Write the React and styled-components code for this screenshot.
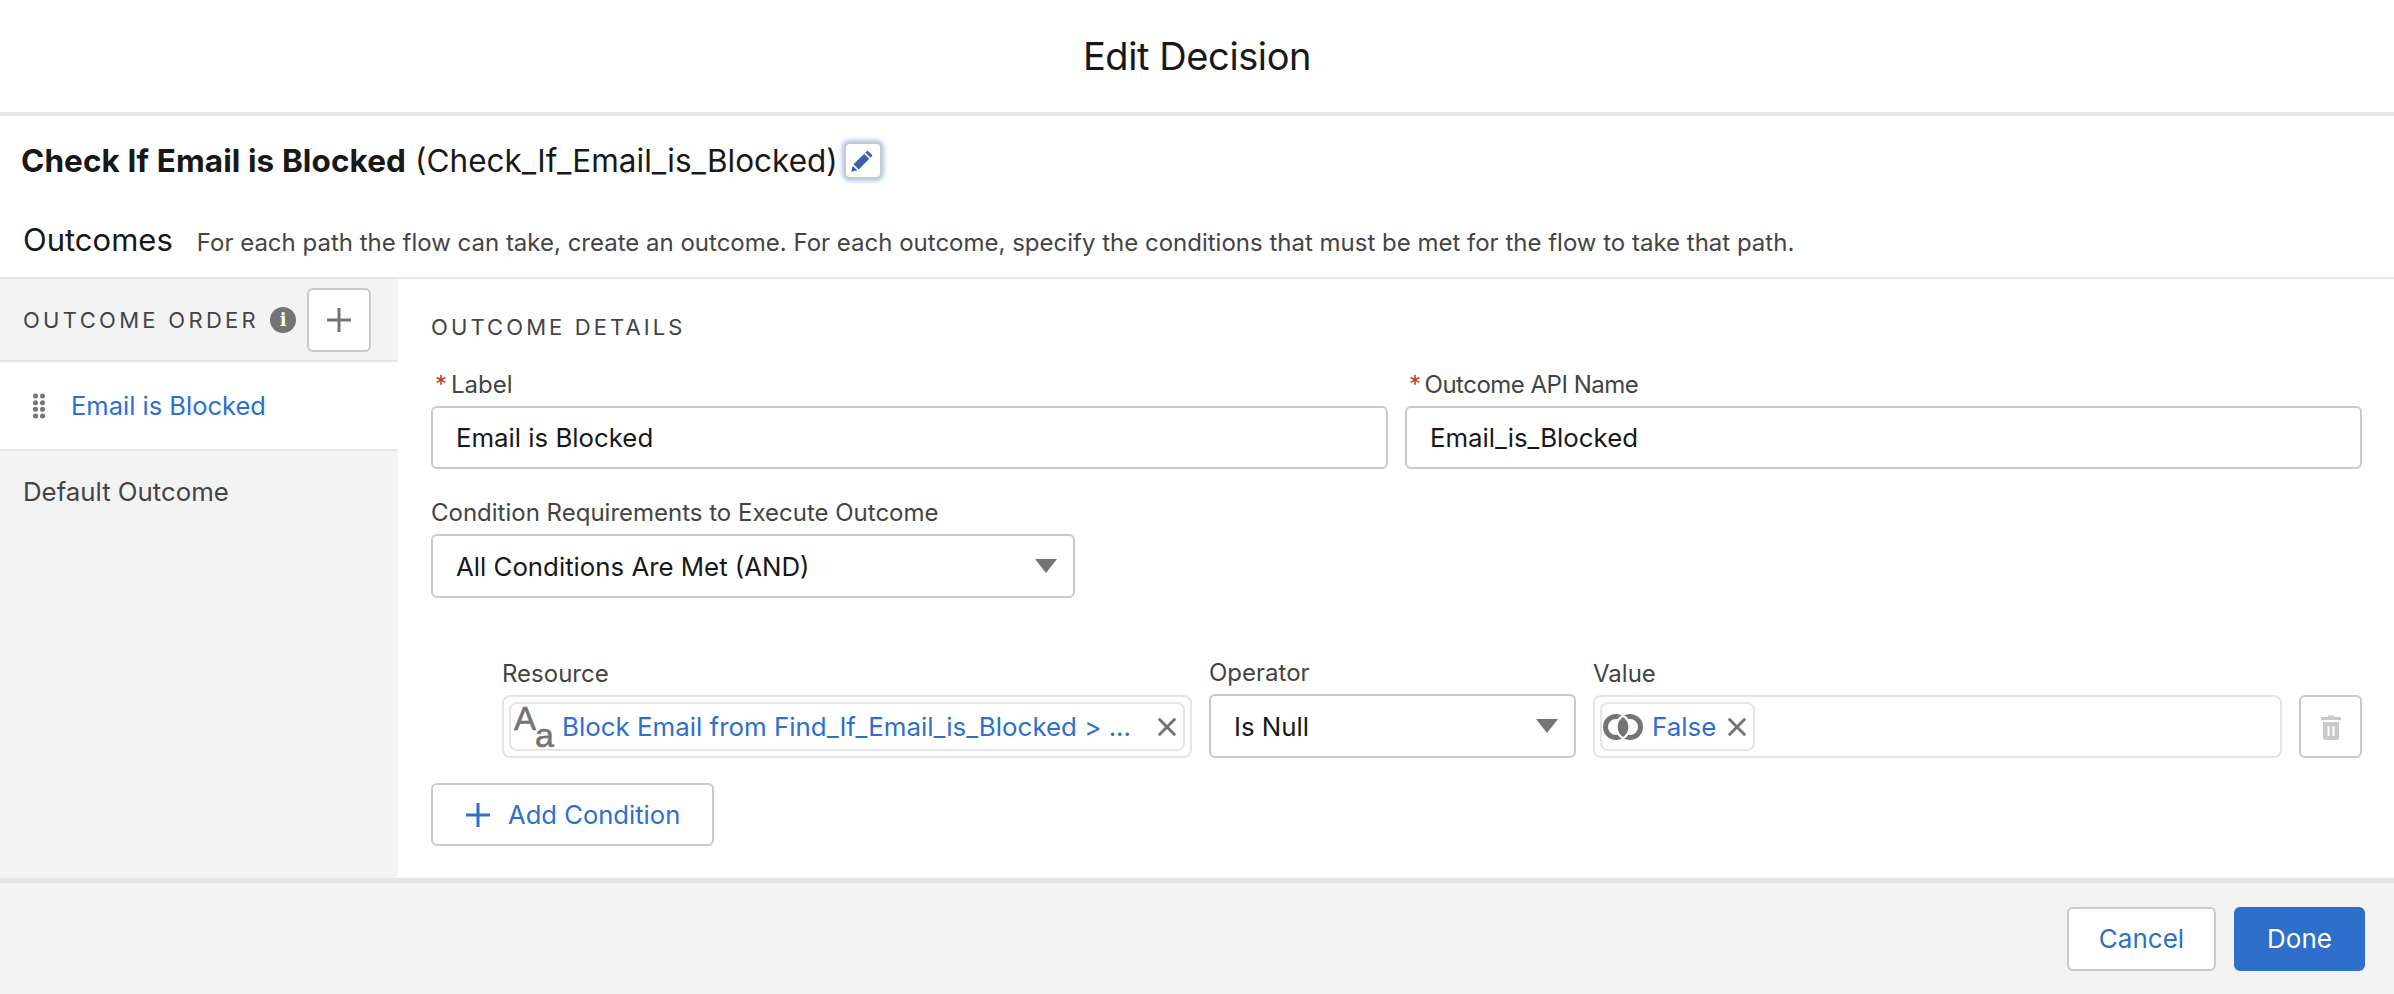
import React from "react";
import styled, { createGlobalStyle } from "styled-components";

const GlobalStyle = createGlobalStyle`
  html, body { margin: 0; padding: 0; background: #fff; }
  body { font-family: Inter, "Liberation Sans", sans-serif; color: #181818; }
  * { box-sizing: border-box; }
`;

const blue = "#2e6fcb";

const Modal = styled.div`
  width: 2394px;
  height: 994px;
  display: flex;
  flex-direction: column;
  overflow: hidden;
`;

const Header = styled.header`
  height: 116px;
  flex: none;
  display: flex;
  align-items: center;
  justify-content: center;
  border-bottom: 4px solid #e5e5e5;
`;

const Title = styled.h1`
  margin: 0;
  font-size: 38px;
  letter-spacing: -0.4px;
  font-weight: 400;
  color: #181818;
`;

const NameRow = styled.div`
  height: 84px;
  flex: none;
  display: flex;
  align-items: center;
  padding: 4px 0 0 21px;
  font-size: 31.5px;
  color: #181818;
  strong { font-weight: 700; margin-right: 9px; letter-spacing: 0.1px; }
`;

const EditButton = styled.button`
  width: 38px;
  height: 37px;
  margin-left: 6px;
  padding: 0;
  display: flex;
  align-items: center;
  justify-content: center;
  background: #fff;
  border: 2px solid #c9c9c9;
  border-radius: 6px;
  box-shadow: 0 0 4px 2px #a9c8f0;
`;

const OutcomesRow = styled.div`
  height: 79px;
  flex: none;
  display: flex;
  align-items: center;
  padding: 2px 0 0 23px;
  border-bottom: 2px solid #e5e5e5;
`;

const OutcomesTitle = styled.span`
  font-size: 31px;
  color: #181818;
  margin-right: 24px;
`;

const OutcomesHint = styled.span`
  font-size: 24px;
  color: #444;
  padding-top: 5px;
`;

const Body = styled.div`
  flex: 1;
  display: flex;
  min-height: 0;
`;

const Sidebar = styled.aside`
  width: 398px;
  flex: none;
  background: #f3f3f3;
  display: flex;
  flex-direction: column;
`;

const SidebarHead = styled.div`
  height: 83px;
  display: flex;
  align-items: center;
  padding-left: 23px;
  border-bottom: 2px solid #e5e5e5;
`;

const SectionLabel = styled.span`
  font-size: 22px;
  letter-spacing: 3.3px;
  color: #444;
`;

const InfoDot = styled.span`
  width: 26px;
  height: 26px;
  margin-left: 11px;
  border-radius: 50%;
  background: #747474;
  display: flex;
  align-items: center;
  justify-content: center;
  color: #fff;
  font-size: 18px;
  font-weight: 800;
  font-family: "DejaVu Serif", serif;
`;

const AddOutcome = styled.button`
  width: 64px;
  height: 64px;
  margin-left: 11px;
  padding: 0;
  display: flex;
  align-items: center;
  justify-content: center;
  background: #fff;
  border: 2px solid #c9c9c9;
  border-radius: 6px;
`;

const OutcomeActive = styled.div`
  height: 89px;
  background: #fff;
  display: flex;
  align-items: center;
  padding-left: 33px;
  gap: 26px;
  font-size: 25.5px;
  color: ${blue};
  border-bottom: 2px solid #e5e5e5;
`;

const OutcomeItem = styled.div`
  height: 86px;
  display: flex;
  align-items: center;
  padding: 0 0 5px 23px;
  font-size: 25.8px;
  color: #444;
`;

const Main = styled.main`
  flex: 1;
  min-width: 0;
  padding: 34px 32px 0 33px;
  display: flex;
  flex-direction: column;
`;

const DetailsLabel = styled(SectionLabel)`
  line-height: 28px;
  letter-spacing: 3.1px;
  margin-bottom: 33px;
`;

const TwoCols = styled.div`
  display: grid;
  grid-template-columns: 957px 957px;
  column-gap: 17px;
`;

const Field = styled.div`
  display: flex;
  flex-direction: column;
  min-width: 0;
`;

const FieldLabel = styled.label`
  height: 29px;
  line-height: 21px;
  margin-bottom: 3px;
  font-size: 24px;
  color: #444;
  display: block;
  letter-spacing: ${(p) => p.$spacing || "normal"};
`;

const Required = styled.span`
  color: #c23934;
  margin: 0 4px 0 4px;
`;

const TextInput = styled.div`
  height: 63px;
  display: flex;
  align-items: center;
  padding: 0 23px;
  font-size: 25.8px;
  color: #181818;
  background: #fff;
  border: 2px solid #c9c9c9;
  border-radius: 6px;
`;

const SelectBox = styled(TextInput)`
  width: ${(p) => p.$width || "100%"};
  height: 64px;
  justify-content: space-between;
  padding-right: 16px;
`;

const Caret = styled.span`
  width: 0;
  height: 0;
  border-left: 11px solid transparent;
  border-right: 11px solid transparent;
  border-top: 14px solid #747474;
`;

const RequirementField = styled(Field)`
  margin-top: 33px;
`;

const ConditionRow = styled.div`
  display: flex;
  margin: 64px 0 0 71px;
  gap: 17px;
  align-items: flex-end;
`;

const PillBox = styled.div`
  width: ${(p) => p.$width};
  height: 63px;
  display: flex;
  align-items: center;
  padding: 0 5px;
  background: #fff;
  border: 2px solid #e5e5e5;
  border-radius: 8px;
`;

const Pill = styled.div`
  height: 49px;
  flex: ${(p) => (p.$wide ? 1 : "none")};
  display: flex;
  align-items: center;
  padding: 0 6px 0 1px;
  font-size: 25.9px;
  color: ${blue};
  border: 2px solid #e5e5e5;
  border-radius: 8px;
  background: #fff;
`;

const PillText = styled.span`
  flex: 1;
  white-space: nowrap;
  margin: 0 11px 0 9px;
`;

const TextIcon = styled.span`
  width: 39px;
  height: 46px;
  margin-left: 2px;
  flex: none;
  display: flex;
  color: #747474;
  font-family: "Liberation Sans", sans-serif;
  line-height: 1;
  -webkit-text-stroke: 0.6px #747474;
  span:first-child { font-size: 33px; margin-top: -2px; }
  span:last-child { font-size: 34px; margin: 14px 0 0 -1px; }
`;

const TrashButton = styled.button`
  width: 63px;
  height: 63px;
  padding: 0;
  display: flex;
  align-items: center;
  justify-content: center;
  background: #fff;
  border: 2px solid #c9c9c9;
  border-radius: 6px;
`;

const AddCondition = styled.button`
  width: 283px;
  height: 63px;
  margin-top: 25px;
  padding: 0 0 0 33px;
  display: flex;
  align-items: center;
  gap: 18px;
  background: #fff;
  border: 2px solid #c9c9c9;
  border-radius: 6px;
  font: inherit;
  font-size: 25.6px;
  color: ${blue};
`;

const Footer = styled.footer`
  height: 116px;
  flex: none;
  background: #f3f3f3;
  border-top: 5px solid #e5e5e5;
  display: flex;
  align-items: center;
  justify-content: flex-end;
  gap: 18px;
  padding: 0 29px 0 0;
`;

const FooterButton = styled.button`
  width: ${(p) => p.$width};
  height: 64px;
  font: inherit;
  font-size: 26px;
  border-radius: 6px;
  border: 2px solid ${(p) => (p.$primary ? blue : "#c9c9c9")};
  background: ${(p) => (p.$primary ? blue : "#fff")};
  color: ${(p) => (p.$primary ? "#fff" : blue)};
`;

const Plus = ({ size, color, width = 3 }) => (
  <svg width={size} height={size} viewBox="0 0 24 24">
    <path d="M12 0V24M0 12H24" stroke={color} strokeWidth={width} fill="none" />
  </svg>
);

const Cross = ({ size = 20 }) => (
  <svg width={size} height={size} viewBox="0 0 22 22" style={{ flex: "none" }}>
    <path d="M2 2L20 20M20 2L2 20" stroke="#747474" strokeWidth="3.2" fill="none" />
  </svg>
);

const Pencil = () => (
  <svg width="23" height="23" viewBox="0 0 24 24">
    <path d="M17.2 1.5l5.3 5.3-2.2 2.2-5.3-5.3zM13.8 4.9l5.3 5.3L8 21.3 2.7 16zM1.8 17.5l4.7 4.7-6.3 1.6z" fill="#3a62a8" />
  </svg>
);

const Grip = () => (
  <svg width="12" height="26" viewBox="0 0 12 26">
    {[3, 9.7, 16.3, 23].map((y) =>
      [2.5, 9.5].map((x) => <circle key={`${x}-${y}`} cx={x} cy={y} r="2.5" fill="#747474" />)
    )}
  </svg>
);

const Rings = () => (
  <svg width="40" height="26" viewBox="0 0 40 26" style={{ flex: "none" }}>
    <circle cx="13" cy="13" r="10.5" stroke="#747474" strokeWidth="5" fill="none" />
    <circle cx="27" cy="13" r="10.5" stroke="#747474" strokeWidth="5" fill="none" />
    <path d="M20 0.5a14 14 0 0 1 0 25a14 14 0 0 1 0-25z" fill="#fff" />
    <path d="M20 3a12 12 0 0 1 0 20a12 12 0 0 1 0-20z" fill="#747474" />
  </svg>
);

const Trash = () => (
  <svg width="24" height="26" viewBox="0 0 24 26">
    <path d="M9 3V1.5h6V3h7v3H2V3zM4 8h16v16a2 2 0 0 1-2 2H6a2 2 0 0 1-2-2z" fill="#c9c9c9" />
    <path d="M9.5 12v10M14.5 12v10" stroke="#fff" strokeWidth="2" />
  </svg>
);

export default function App() {
  return (
    <>
      <GlobalStyle />
      <Modal>
        <Header>
          <Title>Edit Decision</Title>
        </Header>
        <NameRow>
          <strong>Check If Email is Blocked</strong>
          <span>(Check_If_Email_is_Blocked)</span>
          <EditButton>
            <Pencil />
          </EditButton>
        </NameRow>
        <OutcomesRow>
          <OutcomesTitle>Outcomes</OutcomesTitle>
          <OutcomesHint>
            For each path the flow can take, create an outcome. For each outcome, specify the conditions that must be met for the flow to take that path.
          </OutcomesHint>
        </OutcomesRow>
        <Body>
          <Sidebar>
            <SidebarHead>
              <SectionLabel>OUTCOME ORDER</SectionLabel>
              <InfoDot>i</InfoDot>
              <AddOutcome>
                <Plus size={24} color="#747474" />
              </AddOutcome>
            </SidebarHead>
            <OutcomeActive>
              <Grip />
              Email is Blocked
            </OutcomeActive>
            <OutcomeItem>Default Outcome</OutcomeItem>
          </Sidebar>
          <Main>
            <DetailsLabel>OUTCOME DETAILS</DetailsLabel>
            <TwoCols>
              <Field>
                <FieldLabel>
                  <Required>*</Required>Label
                </FieldLabel>
                <TextInput>Email is Blocked</TextInput>
              </Field>
              <Field>
                <FieldLabel $spacing="-0.5px">
                  <Required>*</Required>Outcome API Name
                </FieldLabel>
                <TextInput>Email_is_Blocked</TextInput>
              </Field>
            </TwoCols>
            <RequirementField>
              <FieldLabel>Condition Requirements to Execute Outcome</FieldLabel>
              <SelectBox $width="644px">
                All Conditions Are Met (AND)
                <Caret />
              </SelectBox>
            </RequirementField>
            <ConditionRow>
              <Field>
                <FieldLabel>Resource</FieldLabel>
                <PillBox $width="690px">
                  <Pill $wide>
                    <TextIcon>
                      <span>A</span>
                      <span>a</span>
                    </TextIcon>
                    <PillText>Block Email from Find_If_Email_is_Blocked &gt; ...</PillText>
                    <Cross />
                  </Pill>
                </PillBox>
              </Field>
              <Field>
                <FieldLabel>Operator</FieldLabel>
                <SelectBox $width="367px">
                  Is Null
                  <Caret />
                </SelectBox>
              </Field>
              <Field>
                <FieldLabel>Value</FieldLabel>
                <PillBox $width="689px">
                  <Pill>
                    <Rings />
                    <PillText>False</PillText>
                    <Cross />
                  </Pill>
                </PillBox>
              </Field>
              <TrashButton>
                <Trash />
              </TrashButton>
            </ConditionRow>
            <AddCondition>
              <Plus size={24} color={blue} />
              Add Condition
            </AddCondition>
          </Main>
        </Body>
        <Footer>
          <FooterButton $width="149px">Cancel</FooterButton>
          <FooterButton $width="131px" $primary>Done</FooterButton>
        </Footer>
      </Modal>
    </>
  );
}
